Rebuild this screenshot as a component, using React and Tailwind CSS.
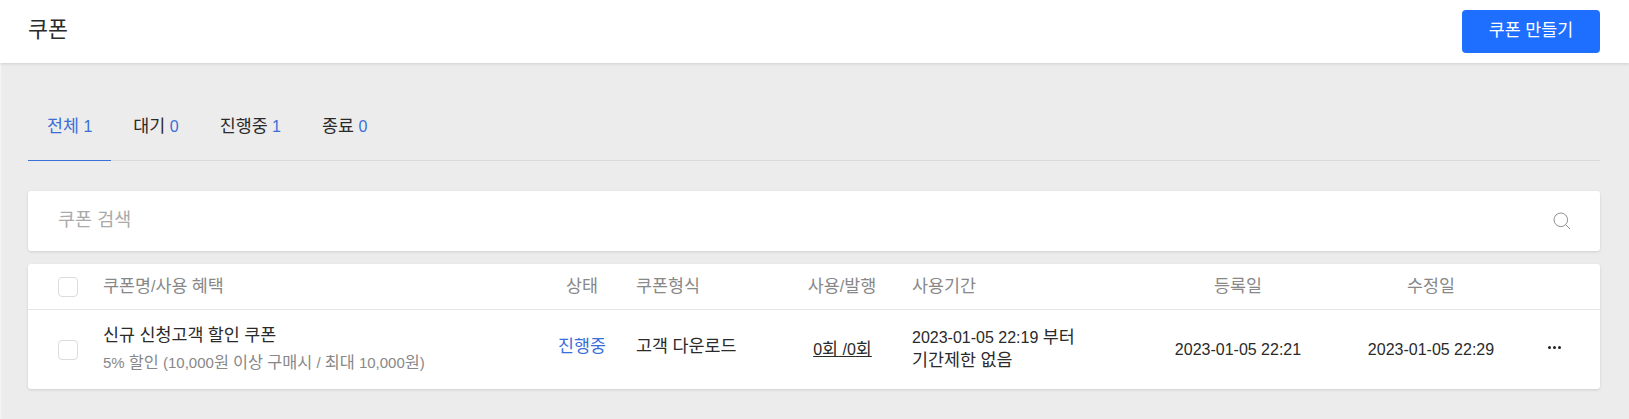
const FONT = "font-['Liberation_Sans','Noto_Sans_CJK_KR',sans-serif]";

const TABS = [
  { label: "전체", count: 1, active: true },
  { label: "대기", count: 0 },
  { label: "진행중", count: 1 },
  { label: "종료", count: 0 },
];

const K = ({ children }) => (
  <>
    {children.split(/([가-힣]+)/).map((part, i) =>
      i % 2 ? (
        <span key={i} className="text-[1.087em] leading-none">
          {part}
        </span>
      ) : (
        part
      ),
    )}
  </>
);

const Check = () => (
  <input
    type="checkbox"
    className="block h-5 w-5 appearance-none rounded-[4px] border border-[#dcdcdc] bg-white"
  />
);

const SearchIcon = () => (
  <svg width="18" height="18" viewBox="0 0 18 18" fill="none" stroke="#8f8f8f" strokeWidth="1">
    <circle cx="7.8" cy="7.8" r="6.8" />
    <path d="M12.6 12.6 17 17" />
  </svg>
);

const COLS = "grid grid-cols-[75px_437px_84px_158px_120px_243px_186px_200px_46px_23px] items-center";

export default function App() {
  return (
    <div className={`${FONT} min-h-screen bg-[#ececec] pb-[10px] text-[#2a2a2a] shadow-[inset_2px_0_2px_-1px_rgba(255,255,255,0.6)]`}>
      {/* top bar */}
      <header className="flex h-[63px] items-center justify-between bg-white pl-[28px] pr-[29px] shadow-[0_1px_3px_rgba(0,0,0,0.12)]">
        <h1 className="mb-[4px] text-[20px] font-normal"><K>쿠폰</K></h1>
        <button
          type="button"
          className="mb-[1px] h-[43px] w-[138px] rounded-[4px] bg-[#1e6fff] text-[16px] text-white"
        >
          <K>쿠폰 만들기</K>
        </button>
      </header>

      <main className="pl-[28px] pr-[29px]">
        {/* tabs */}
        <nav className="mt-[35px] flex h-[63px] gap-[3px] border-b border-[#d9d9d9]">
          {TABS.map((t) => (
            <a
              key={t.label}
              className={[
                "-mb-px flex h-[63px] items-center px-[19px] pb-[5px] text-[16px]",
                t.active ? "border-b border-[#3a6fd8] text-[#3a6fd8]" : "",
              ].join(" ")}
            >
              <span>
                <K>{t.label}</K> <span className="text-[#3a6fd8]">{t.count}</span>
              </span>
            </a>
          ))}
        </nav>

        {/* search */}
        <div className="mt-[30px] flex h-[60px] items-center rounded-[3px] bg-white pl-[30px] pr-[29px] shadow-[0_1px_3px_rgba(0,0,0,0.12)]">
          <input
            placeholder="쿠폰 검색"
            className="h-full flex-1 pb-[2px] text-[18.5px] outline-none placeholder:text-[#aaa]"
          />
          <SearchIcon />
        </div>

        {/* list */}
        <section className="mt-[13px] rounded-[3px] bg-white shadow-[0_1px_3px_rgba(0,0,0,0.12)]">
          <div className={`${COLS} h-[46px] border-b border-[#e5e5e5] text-[16px] text-[#888]`}>
            <div className="pl-[30px]"><Check /></div>
            <div><K>쿠폰명/사용 혜택</K></div>
            <div className="text-center"><K>상태</K></div>
            <div className="pl-[12px]"><K>쿠폰형식</K></div>
            <div className="text-center"><K>사용/발행</K></div>
            <div className="pl-[10px]"><K>사용기간</K></div>
            <div className="text-center"><K>등록일</K></div>
            <div className="text-center"><K>수정일</K></div>
          </div>
          <div className={`${COLS} h-[79px] text-[16px]`}>
            <div className="pl-[30px]"><Check /></div>
            <div className="mb-[1px]">
              <div className="leading-[22px]"><K>신규 신청고객 할인 쿠폰</K></div>
              <div className="mt-[6px] text-[15px] leading-[20px] text-[#888]">
                <K>5% 할인 (10,000원 이상 구매시 / 최대 10,000원)</K>
              </div>
            </div>
            <div className="mb-[5px] text-center text-[#3a6fd8]"><K>진행중</K></div>
            <div className="mb-[5px] pl-[12px]"><K>고객 다운로드</K></div>
            <div className="pl-[1px] text-center underline"><K>0회 /0회</K></div>
            <div className="mb-[1px] pl-[10px] leading-[23px]">
              <K>2023-01-05 22:19 부터</K>
              <br />
              <K>기간제한 없음</K>
            </div>
            <div className="text-center">2023-01-05 22:21</div>
            <div className="text-center">2023-01-05 22:29</div>
            <div className="mb-[4px] flex justify-center gap-[2px]">
              <i className="h-[3px] w-[3px] rounded-full bg-[#222]" />
              <i className="h-[3px] w-[3px] rounded-full bg-[#222]" />
              <i className="h-[3px] w-[3px] rounded-full bg-[#222]" />
            </div>
          </div>
        </section>
      </main>
    </div>
  );
}
